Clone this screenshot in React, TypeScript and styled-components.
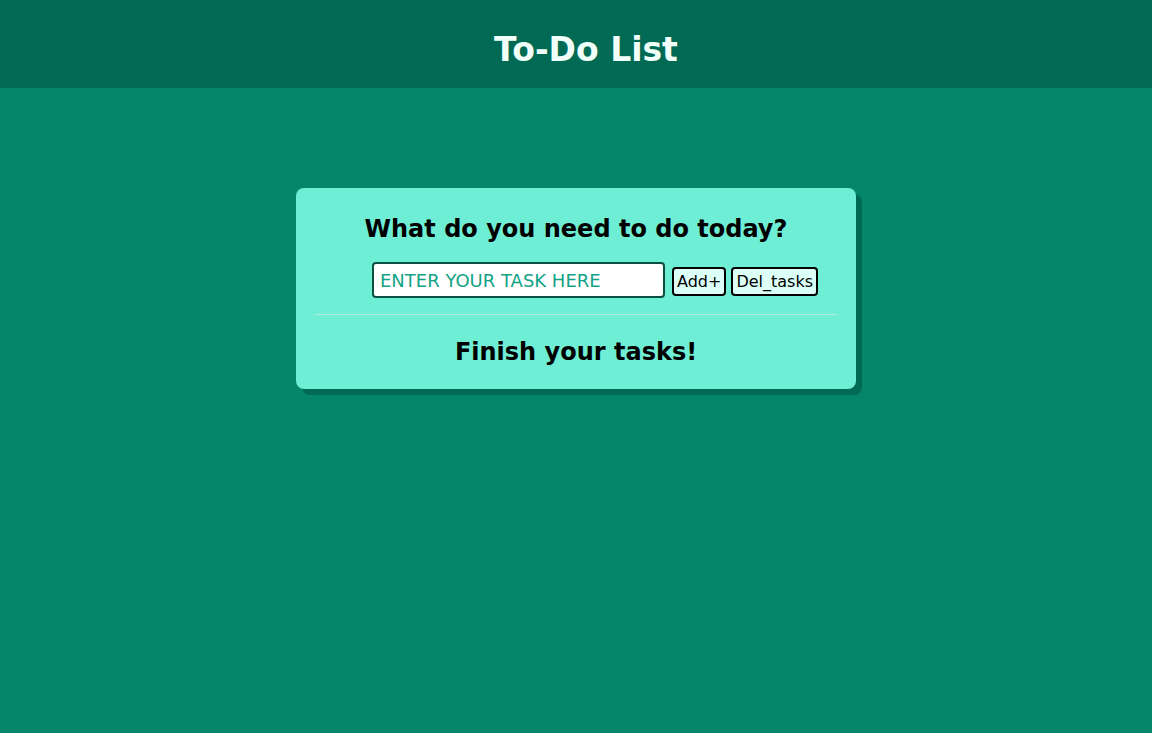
import React from "react";
import styled, { createGlobalStyle } from "styled-components";

const Global = createGlobalStyle`
  html, body { margin: 0; padding: 0; }
  body {
    background: #05856a;
    font-family: "DejaVu Sans", Verdana, sans-serif;
    min-height: 100vh;
  }
`;

const Header = styled.header`
  height: 88px;
  background: #006a54;
  display: flex;
  align-items: center;
  justify-content: center;
  padding: 10px 0 0 20px;
  box-sizing: border-box;
`;

const Title = styled.h1`
  margin: 0;
  font-size: 33px;
  font-weight: bold;
  color: #f0fffa;
`;

const Main = styled.main`
  display: flex;
  justify-content: center;
  padding-top: 100px;
`;

const Card = styled.section`
  width: 560px;
  box-sizing: border-box;
  background: #6eeed4;
  border-radius: 8px;
  box-shadow: 6px 6px 0 #006a54;
  padding: 25px 19px 21px;
  display: flex;
  flex-direction: column;
  align-items: stretch;
`;

const Heading = styled.h2`
  margin: 0;
  font-size: 24px;
  font-weight: bold;
  text-align: center;
  color: #000;
  line-height: 32px;
`;

const Row = styled.div`
  display: flex;
  justify-content: center;
  align-items: center;
  gap: 5px;
  padding-left: 38px;
  margin-top: 17px;
`;

const Input = styled.input`
  width: 293px;
  height: 36px;
  box-sizing: border-box;
  border: 2px solid #0b4f41;
  border-radius: 4px;
  background: #fff;
  font-family: inherit;
  font-size: 18px;
  padding: 0 6px;
  margin-right: 2px;
  &::placeholder { color: #12a385; }
`;

const Button = styled.button`
  height: 29px;
  margin-top: 2px;
  box-sizing: border-box;
  border: 2px solid #000;
  border-radius: 4px;
  background: #dcfff8;
  font-family: inherit;
  font-size: 16px;
  color: #000;
  padding: 0 3px;
`;

const Divider = styled.hr`
  margin: 16px 0 0;
  border: none;
  border-top: 1px solid #b6e8dc;
`;

const Finish = styled.h2`
  margin: 21px 0 0;
  font-size: 24px;
  font-weight: bold;
  text-align: center;
  color: #000;
  line-height: 32px;
`;

export default function App() {
  return (
    <>
      <Global />
      <Header>
        <Title>To-Do List</Title>
      </Header>
      <Main>
        <Card>
          <Heading>What do you need to do today?</Heading>
          <Row>
            <Input placeholder="ENTER YOUR TASK HERE" />
            <Button>Add+</Button>
            <Button>Del_tasks</Button>
          </Row>
          <Divider />
          <Finish>Finish your tasks!</Finish>
        </Card>
      </Main>
    </>
  );
}
